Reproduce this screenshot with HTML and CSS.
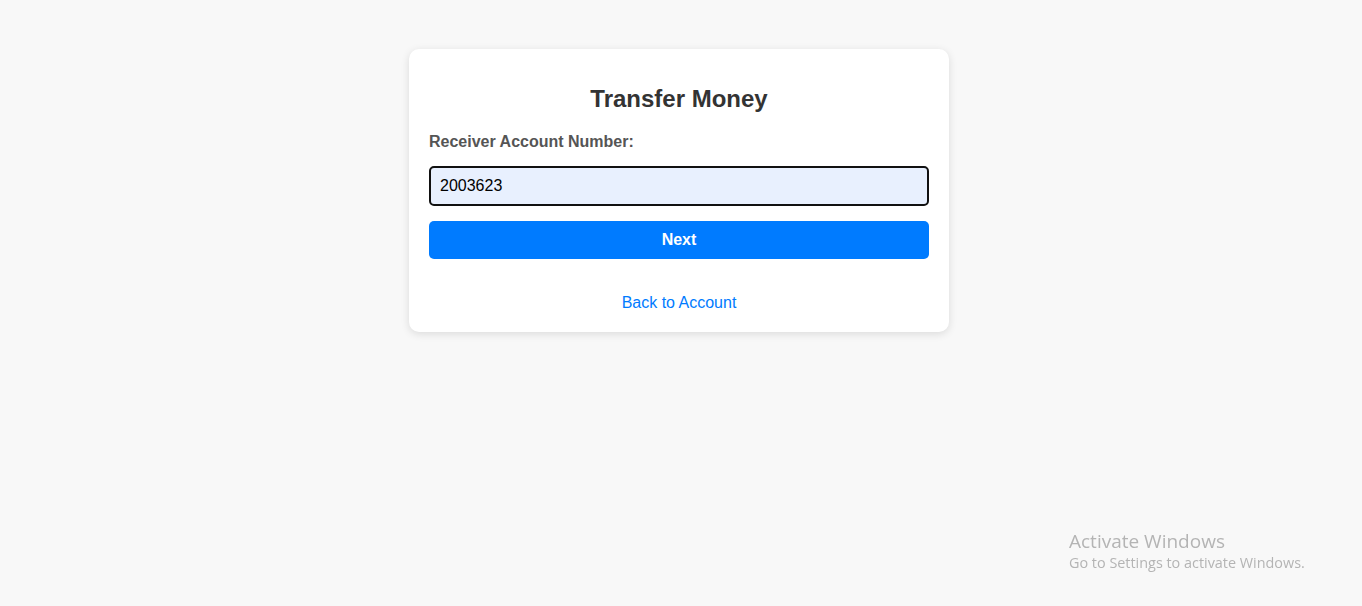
FILE: index.html
```html
<!DOCTYPE html>
<html lang="en">
<head>
<meta charset="utf-8">
<title>Transfer Money</title>
<link rel="stylesheet" href="styles.css">
</head>
<body>
<div class="card">
  <h2 class="title">Transfer Money</h2>
  <form class="form">
    <label class="label" for="acc">Receiver Account Number:</label>
    <input class="input" id="acc" type="text" value="2003623">
    <button class="btn" type="button">Next</button>
  </form>
  <div class="back"><a class="link" href="#">Back to Account</a></div>
</div>
<div class="watermark">
  <div class="wm-title">Activate Windows</div>
  <div class="wm-sub">Go to Settings to activate Windows.</div>
</div>
</body>
</html>
```

FILE: styles.css
```css
html, body {
  margin: 0;
  padding: 0;
}
body {
  background: #f8f8f8;
  font-family: "Liberation Sans", Arial, sans-serif;
  height: 606px;
  overflow: hidden;
}
.card {
  width: 500px;
  margin: 49px auto 0;
  padding: 20px;
  background: #fff;
  border-radius: 10px;
  box-shadow: 0 2px 8px rgba(0,0,0,0.12);
  position: relative;
  left: -2px;
}
.title {
  margin: 16px 0 20px;
  text-align: center;
  font-size: 24px;
  font-weight: bold;
  color: #333;
  line-height: 28px;
}
.form {
  display: flex;
  flex-direction: column;
}
.label {
  display: block;
  font-size: 16px;
  font-weight: bold;
  color: #555;
  line-height: 18px;
  margin-bottom: 15px;
}
.input {
  box-sizing: border-box;
  height: 40px;
  width: 100%;
  padding: 0 9px;
  border: 2px solid #111;
  border-radius: 5px;
  background: #e8f0fe;
  font-family: "Liberation Sans", Arial, sans-serif;
  font-size: 16px;
  color: #000;
  outline: none;
  margin: 0 0 15px;
}
.btn {
  height: 38px;
  width: 100%;
  border: none;
  border-radius: 5px;
  background: #007bff;
  color: #fff;
  font-family: "Liberation Sans", Arial, sans-serif;
  font-size: 16px;
  font-weight: bold;
  margin: 0;
}
.back {
  text-align: center;
  margin-top: 35px;
  line-height: 18px;
}
.link {
  color: #007bff;
  text-decoration: none;
  font-size: 16px;
}
.watermark {
  position: fixed;
  left: 1069px;
  top: 529px;
  color: #b4b4b4;
  font-family: "Open Sans", "Noto Sans", sans-serif;
}
.wm-title {
  font-size: 19px;
  line-height: 24px;
}
.wm-sub {
  font-size: 14.4px;
  line-height: 20px;
}
```
